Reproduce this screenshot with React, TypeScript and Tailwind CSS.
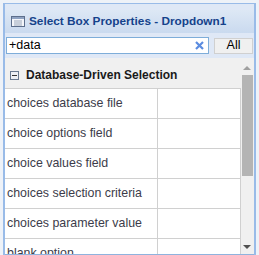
import React from 'react';

const rows = [
	'choices database file',
	'choice options field',
	'choice values field',
	'choices selection criteria',
	'choices parameter value',
	'blank option',
];

const ListIcon: React.FC = () => (
	<svg width="14" height="11" viewBox="0 0 14 11" className="shrink-0">
		<rect x="0.5" y="0.5" width="13" height="10" fill="#f4f6fa" stroke="#5d6f8c" />
		<rect x="1" y="1" width="12" height="2" fill="#8fa3c2" />
		<line x1="3" y1="5" x2="11" y2="5" stroke="#9aa7ba" />
		<line x1="3" y1="7" x2="11" y2="7" stroke="#9aa7ba" />
		<line x1="3" y1="9" x2="11" y2="9" stroke="#9aa7ba" />
	</svg>
);

export default function App() {
	return (
		<div
			className="w-[259px] h-[255px] overflow-hidden bg-[#eef2f8] pt-[3px] pl-[3px]"
			style={{ fontFamily: '"Liberation Sans", Arial, sans-serif' }}
		>
			<div className="w-[253px] h-[252px] border-t border-l-2 border-r-2 border-[#99bbe8] bg-[#dfe8f6] flex flex-col">
				{/* Title bar */}
				<div className="shrink-0 h-[23px] mt-[6px] flex items-center gap-[4px] pl-[6px] bg-gradient-to-b from-[#dde8f5] to-[#cadaef]">
					<ListIcon />
					<span className="text-[11.8px] font-bold text-[#15428b] whitespace-nowrap">
						Select Box Properties - Dropdown1
					</span>
				</div>

				{/* Search row */}
				<div className="shrink-0 flex items-center gap-[5px] pl-[1px] h-[25px]">
					<div className="w-[203px] h-[17px] bg-white border border-[#7eadd9] flex items-center px-[2px]">
						<span className="flex-1 text-[12.5px] text-[#000] leading-none">+data</span>
						<svg width="9" height="9" viewBox="0 0 9 9" className="mr-[2px]">
							<path d="M1 1L8 8M8 1L1 8" stroke="#5b8ce0" strokeWidth="2.2" />
						</svg>
					</div>
					<button className="w-[39px] h-[16px] bg-[#f0f0f0] border border-[#d0d0d0] text-[12.5px] text-[#000] leading-none">
						All
					</button>
				</div>

				{/* Property panel */}
				<div className="flex-1 min-h-0 bg-[#f0f0f0] border-b border-[#8fb3de] flex overflow-hidden">
					<div className="flex-1 flex flex-col min-w-0">
						<div className="shrink-0 h-[30px] pt-[4px] flex items-center gap-[7px] pl-[5px]">
							<span className="w-[9px] h-[9px] border border-[#6a7a90] bg-[#eef0f4] flex items-center justify-center">
								<span className="w-[5px] h-[1px] bg-[#333]" />
							</span>
							<span className="text-[12px] font-bold text-[#1a1a1a] whitespace-nowrap">Database-Driven Selection</span>
						</div>
						<div className="shrink-0 border-t border-r border-[#d0d0d0] bg-white w-[236px]">
							{rows.map((r) => (
								<div key={r} className="h-[30px] flex border-b border-[#d0d0d0]">
									<div className="w-[153px] border-r border-[#d0d0d0] flex items-center pl-[2px] text-[12.4px] text-[#3c3c4a] whitespace-nowrap">
										{r}
									</div>
									<div className="flex-1" />
								</div>
							))}
						</div>
					</div>

					{/* Scrollbar */}
					<div className="w-[12px] mr-[1px] flex flex-col items-center">
						<span className="mt-[8px] w-0 h-0 border-l-[4px] border-r-[4px] border-b-[4px] border-l-transparent border-r-transparent border-b-[#a0a0a0]" />
						<div className="w-[11px] h-[101px] bg-[#b4b4b4] mt-[5px]" />
						<div className="flex-1" />
						<span className="mb-[5px] w-0 h-0 border-l-[4px] border-r-[4px] border-t-[4px] border-l-transparent border-r-transparent border-t-[#505050]" />
					</div>
				</div>
			</div>
		</div>
	);
}
